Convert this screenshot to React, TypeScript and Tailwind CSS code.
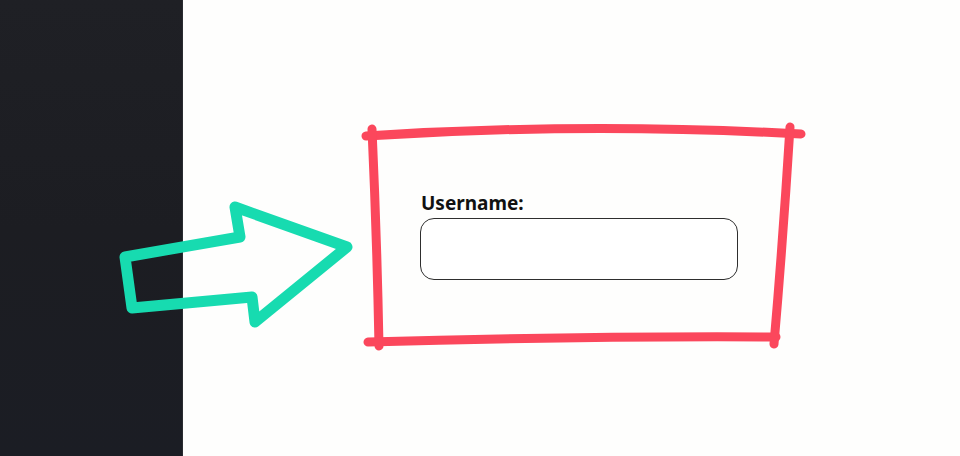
import React from "react";

export default function App() {
  return (
    <div className="relative w-[960px] h-[456px] overflow-hidden flex bg-[#fefefd]" style={{ fontFamily: '"Noto Sans", "Open Sans", sans-serif' }}>
      <div className="w-[183px] h-full bg-gradient-to-b from-[#1f2025] via-[#1c1d22] to-[#1b1d24] border-r border-[#2a2c31]" />
      <div className="flex-1 h-full pl-[238px] pt-[189px]">
        <div className="text-[19px] leading-[28px] font-bold text-[#111111] mb-[1px]">Username:</div>
        <input
          type="text"
          aria-label="Username"
          className="block -ml-[1px] w-[318px] h-[62px] rounded-[14px] border border-[#2e2e2e] bg-white outline-none"
        />
      </div>
      <svg className="absolute left-0 top-0 pointer-events-none" width="960" height="456" viewBox="0 0 960 456" fill="none">
        <path
          d="M125 257 L240 237 L235 207 L347 247 L255 322 L252 297 L132 308 Z"
          stroke="#17dbb0"
          strokeWidth="11"
          strokeLinejoin="round"
          strokeLinecap="round"
        />
        <g stroke="#fb475c" strokeWidth="9" strokeLinecap="round" fill="none">
          <path d="M366 136 Q585 122 801 134" />
          <path d="M372 129 Q377 240 379 346" />
          <path d="M368 342 Q570 336 776 337" />
          <path d="M790 127 Q783 240 774 344" />
        </g>
      </svg>
    </div>
  );
}
